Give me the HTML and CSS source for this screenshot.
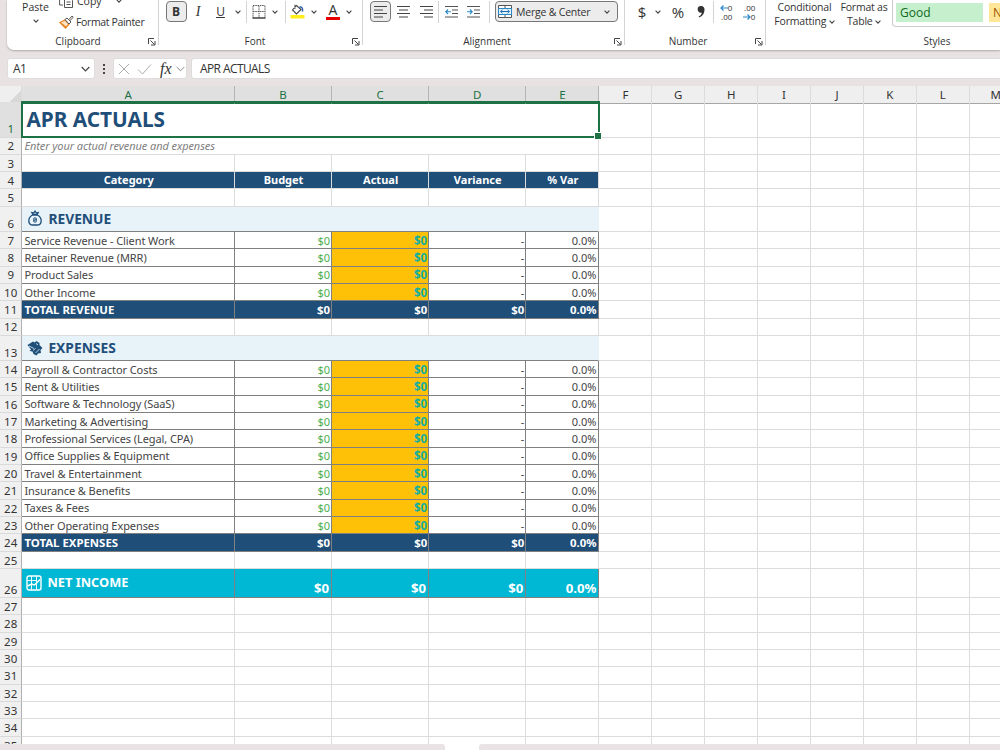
FILE: index.html
```html
<!DOCTYPE html>
<html lang="en">
<head>
  <meta charset="UTF-8">
  <meta name="viewport" content="width=device-width, initial-scale=1.0">
  <title>APR Actuals</title>
  <link rel="stylesheet" href="styles.css">
</head>
<body>

  <!-- Shared icons -->
  <svg class="symbols">
    <symbol id="chev" viewBox="0 0 6 4"><path d="M.6.7 3 3.1 5.4.7" fill="none" stroke="#444" stroke-width="1.1"/></symbol>
    <symbol id="launch" viewBox="0 0 8 8"><path d="M.5 6V.5H6M2.5 2.5l4 4M7 3v4H3" fill="none" stroke="#444"/></symbol>
    <symbol id="bag" viewBox="0 0 14 16"><path d="M4.5 5C2 6.500.8 8.300.8 10.700.8 13.500 2.500 15 5 15h4c2.500 0 4.200-1.500 4.200-4.300C13.200 8.300 12 6.500 9.500 5zM5 4.500 3.800 2.500l2 .3L7 1.200l1.200 1.600 2-.3L9 4.500z" fill="none" stroke="#1f4e79" stroke-width="1.300"/><ellipse cx="7" cy="10" rx="2" ry="2.700" fill="#1f4e79"/><path d="M8 9c-.8-.7-2-.3-1.900.4.1.8 1.900.5 1.900 1.400 0 .7-1.300.9-2 .2" fill="none" stroke="#e7f3f9" stroke-width=".6"/></symbol>
    <symbol id="money" viewBox="0 0 16 16"><path d="M.5 5 6 1.500l1.500 1L9.500 1l3 2v2L15.500 8l-2 2 .5 3-3 .5L9.500 15.500l-3-1.500-1-2.500-3-.5L4 9.500z" fill="#1f4e79"/><path d="M2 6l5 2.500M6 10.500l2.500-2M8.500 13l4-4M9 3.500l2 1.500" stroke="#e7f3f9" stroke-width=".8" fill="none"/></symbol>
    <symbol id="chart" viewBox="0 0 16 16"><path d="M3 1h10a2 2 0 0 1 2 2v10a2 2 0 0 1-2 2H3a2 2 0 0 1-2-2V3a2 2 0 0 1 2-2z" fill="none" stroke="#fff" stroke-width="1.400"/><path d="M5.500 1v14M10.500 1v14M1 5.500h9" fill="none" stroke="#fff" stroke-width=".9"/><path d="m1.500 11 4-2 3 1 5.500-5.500" fill="none" stroke="#fff" stroke-width="1.500"/></symbol>
  </svg>

  <!-- Ribbon -->
  <div class="ribbon">
    <div class="group clipboard">
      <div class="paste">Paste<svg class="chev"><use href="#chev"/></svg></div>
      <div class="clip-list">
        <div class="clip-item">
          <svg width="15" height="14" viewBox="0 0 15 14"><path d="M4 11H.6V1H5M5.500 3.500h5l3 3v7h-8zM7.500 8h4M7.500 10.500h4" fill="none" stroke="#555"/></svg>
          Copy<svg class="chev copy-chev"><use href="#chev"/></svg>
        </div>
        <div class="clip-item painter">
          <svg width="15" height="14" viewBox="0 0 15 14"><path d="M1 7.500 6 5l4 4-3.500 4z" fill="#fbe3c4" stroke="#e8821e" stroke-width="1.300"/><path d="M3.500 9 7 12" stroke="#e8821e"/><path d="m6 4.500 2-1.500 4 4-2 2zM10 4.500 13 1l1.300 1.300L11 5.500" fill="#fff" stroke="#555"/></svg>
          Format Painter
        </div>
      </div>
      <div class="group-label">Clipboard</div>
      <svg class="launch"><use href="#launch"/></svg>
    </div>

    <div class="group font">
      <div class="tools">
        <b class="pressed">B</b>
        <i class="serif">I</i>
        <u>U</u>
        <svg class="chev"><use href="#chev"/></svg>
        <span class="sep"></span>
        <svg width="14" height="14" viewBox="0 0 14 14"><path d="M1 .5h12M1 6.500h12M1 1v12M7 1v12M13 1v12" fill="none" stroke="#555" stroke-dasharray="1.500 .8"/><path d="M.5 13h13" stroke="#222" stroke-width="1.300"/></svg>
        <svg class="chev"><use href="#chev"/></svg>
        <span class="sep"></span>
        <svg width="15" height="15" viewBox="0 0 15 15"><path d="M6.500 1.500 2.500 6l4 4L11 5.500z M5 .8v4" fill="none" stroke="#444" stroke-width="1.100"/><path d="M9.500 3.200c2-.8 3.500.5 3 4.300" stroke="#2b62a8" stroke-width="1.500" fill="none"/><path d="M.5 11h14v3.500H.5z" fill="#ffee1c"/></svg>
        <svg class="chev"><use href="#chev"/></svg>
        <span class="font-color">A</span>
        <svg class="chev"><use href="#chev"/></svg>
      </div>
      <div class="group-label">Font</div>
      <svg class="launch"><use href="#launch"/></svg>
    </div>

    <div class="group alignment">
      <div class="tools">
        <span class="pressed"><svg width="13" height="12" viewBox="0 0 13 12"><path d="M0 .5h13M0 4h9M0 7.500h13M0 11h9" stroke="#444"/></svg></span>
        <svg width="13" height="12" viewBox="0 0 13 12"><path d="M0 .5h13M2 4h9M0 7.500h13M2 11h9" stroke="#444"/></svg>
        <svg width="13" height="12" viewBox="0 0 13 12"><path d="M0 .5h13M4 4h9M0 7.500h13M4 11h9" stroke="#444"/></svg>
        <span class="sep"></span>
        <svg width="13" height="12" viewBox="0 0 13 12"><path d="M0 .5h13M7 4h6M7 7.500h6M0 11h13" stroke="#555"/><path d="M6 5.800H1M3 3.500.8 5.800 3 8" stroke="#2b88c8" stroke-width="1.100" fill="none"/></svg>
        <svg width="13" height="12" viewBox="0 0 13 12"><path d="M0 .5h13M7 4h6M7 7.500h6M0 11h13" stroke="#555"/><path d="M0 5.800h5M3 3.500l2.200 2.300L3 8" stroke="#2b88c8" stroke-width="1.100" fill="none"/></svg>
        <span class="sep"></span>
        <div class="merge">
          <svg width="14" height="13" viewBox="0 0 14 13"><path d="M.5.5h13v12H.5zM7 .5V3M7 10v2.500" fill="#fff" stroke="#555"/><path d="M.5 3.500h13v6H.5z" fill="#e4f2fb" stroke="#2b88c8"/><path d="M2.500 6.500h9M4.500 4.800 2.700 6.500l1.800 1.700M9.500 4.800l1.800 1.700-1.800 1.700" fill="none" stroke="#1b6cb0"/></svg>
          <span>Merge &amp; Center</span>
          <svg class="chev"><use href="#chev"/></svg>
        </div>
      </div>
      <div class="group-label">Alignment</div>
      <svg class="launch"><use href="#launch"/></svg>
    </div>

    <div class="group number">
      <div class="tools">
        <span class="big">$</span>
        <svg class="chev"><use href="#chev"/></svg>
        <span class="big">%</span>
        <svg width="8" height="12" viewBox="0 0 8 12"><path d="M4 0a3.300 3.300 0 0 1 3.500 3.500C7.500 8 5 10.500 2 11.500l-.4-.8C3.500 9.800 4.600 8.500 4.800 6.600 2.500 7.300.7 5.700.7 3.500A3.300 3.300 0 0 1 4 0z" fill="#333"/></svg>
        <span class="sep"></span>
        <div class="decimals"><span><svg width="8" height="6" viewBox="0 0 8 6"><path d="M8 3H1M3.500.5 1 3l2.500 2.500" fill="none" stroke="#2b88c8" stroke-width="1.200"/></svg>0</span><span>.00</span></div>
        <div class="decimals"><span>.00</span><span><svg width="8" height="6" viewBox="0 0 8 6"><path d="M0 3h7M4.500.5 7 3 4.500 5.500" fill="none" stroke="#2b88c8" stroke-width="1.200"/></svg>0</span></div>
      </div>
      <div class="group-label">Number</div>
      <svg class="launch"><use href="#launch"/></svg>
    </div>

    <div class="group styles">
      <div class="style-btn conditional">Conditional<br>Formatting <svg class="chev"><use href="#chev"/></svg></div>
      <div class="style-btn">Format as<br>Table <svg class="chev"><use href="#chev"/></svg></div>
      <div class="gallery">
        <div class="good">Good</div>
        <div class="neutral">Neutral</div>
      </div>
      <div class="group-label">Styles</div>
    </div>
  </div>

  <!-- Formula bar -->
  <div class="formula-bar">
    <div class="name-box">A1<svg width="9" height="6" viewBox="0 0 9 6"><path d="m.7 1 3.800 3.800L8.300 1" fill="none" stroke="#444" stroke-width="1.200"/></svg></div>
    <div class="dots"><i></i><i></i><i></i></div>
    <div class="fx-box">
      <svg width="12" height="12" viewBox="0 0 12 12"><path d="m1 1 10 10M11 1 1 11" stroke="#aaa"/></svg>
      <svg width="15" height="12" viewBox="0 0 15 12"><path d="m1 6.500 4.500 4.500L14 1.500" fill="none" stroke="#aaa"/></svg>
      <span class="fx">fx</span>
      <svg width="9" height="6" viewBox="0 0 9 6"><path d="m.7 1 3.800 3.800L8.300 1" fill="none" stroke="#888"/></svg>
    </div>
    <div class="formula">APR ACTUALS</div>
  </div>

  <!-- Worksheet -->
  <div class="sheet" id="sheet"></div>

  <div class="tabs">
    <div class="tab-left"></div>
    <div class="tab-right"></div>
  </div>

  <script>
    const columns = 'ABCDEFGHIJKLM'.split('');

    // Rows with content, everything else is empty
    const rows = {
      1: { type: 'title', text: 'APR ACTUALS' },
      2: { type: 'note', text: 'Enter your actual revenue and expenses' },
      4: { type: 'head', cells: ['Category', 'Budget', 'Actual', 'Variance', '% Var'] },
      6: { type: 'section', icon: 'bag', text: 'REVENUE' },
      11: { type: 'total', cells: ['TOTAL REVENUE', '$0', '$0', '$0', '0.0%'] },
      13: { type: 'section', icon: 'money', text: 'EXPENSES' },
      24: { type: 'total', cells: ['TOTAL EXPENSES', '$0', '$0', '$0', '0.0%'] },
      26: { type: 'net', icon: 'chart', cells: ['NET INCOME', '$0', '$0', '$0', '0.0%'] }
    };

    const revenue = ['Service Revenue - Client Work', 'Retainer Revenue (MRR)', 'Product Sales', 'Other Income'];
    const expenses = [
      'Payroll & Contractor Costs', 'Rent & Utilities', 'Software & Technology (SaaS)',
      'Marketing & Advertising', 'Professional Services (Legal, CPA)', 'Office Supplies & Equipment',
      'Travel & Entertainment', 'Insurance & Benefits', 'Taxes & Fees', 'Other Operating Expenses'
    ];

    function addItems(names, start) {
      names.forEach((name, i) => {
        rows[start + i] = { type: 'item', cells: [name, '$0', '$0', '-', '0.0%'] };
      });
    }

    addItems(revenue, 7);
    addItems(expenses, 14);

    function icon(name) {
      return name ? `<svg class="icon"><use href="#${name}"/></svg>` : '';
    }

    function createSheet() {
      let html = '<div class="row col-heads"><div class="corner"></div>';
      columns.forEach((c, i) => {
        html += `<div class="col-head${i < 5 ? ' selected' : ''}">${c}</div>`;
      });
      html += '</div>';

      for (let n = 1; n <= 35; n++) {
        const row = rows[n] || { type: 'empty' };
        html += `<div class="row ${row.type}"><div class="row-head${n === 1 ? ' selected' : ''}">${n}</div>`;
        if (row.text) {
          html += `<div class="cell merged">${icon(row.icon)}<span>${row.text}</span></div>`;
        } else {
          for (let i = 0; i < 5; i++) {
            const text = row.cells ? row.cells[i].replace('&', '&amp;') : '';
            html += `<div class="cell c${i}">${i === 0 ? icon(row.icon) : ''}<span>${text}</span></div>`;
          }
        }
        for (let i = 5; i < columns.length; i++) {
          html += '<div class="cell blank"></div>';
        }
        html += '</div>';
      }
      document.getElementById('sheet').innerHTML = html;
    }

    createSheet();
  </script>

</body>
</html>
```
FILE: styles.css
```css
* {
  margin: 0;
  padding: 0;
  box-sizing: border-box;
}

body {
  width: 1000px;
  height: 750px;
  overflow: hidden;
  display: flex;
  flex-direction: column;
  background: #e8e3e2;
  color: #333;
  font-family: "Noto Sans", "Open Sans", sans-serif;
  font-size: 11px;
}

.symbols {
  display: none;
}

.chev {
  width: 6px;
  height: 4px;
}

/* Ribbon */
.ribbon {
  flex: none;
  height: 50px;
  margin-left: 7px;
  display: flex;
  background: #fff;
  border-bottom-left-radius: 7px;
  box-shadow: 0 1px 2px rgba(0, 0, 0, 0.25);
  font-family: "Open Sans", sans-serif;
  font-size: 10.5px;
}

.group {
  position: relative;
  height: 45px;
  flex: none;
  display: flex;
  border-right: 1px solid #d4d4d4;
}

.group-label {
  position: absolute;
  left: 0;
  right: 11px;
  bottom: -3px;
  text-align: center;
  font-size: 10px;
  line-height: 14px;
}

.launch {
  position: absolute;
  right: 2px;
  bottom: -1px;
  width: 8px;
  height: 8px;
}

.clipboard {
  width: 152px;
}

.clipboard .group-label {
  right: 9px;
}

.paste {
  width: 57px;
  display: flex;
  flex-direction: column;
  align-items: center;
  line-height: 14px;
}

.paste .chev {
  margin-top: 5px;
}

.clip-list {
  margin-top: -6px;
}

.clip-item {
  display: flex;
  align-items: center;
  gap: 3px;
  height: 14px;
  margin-left: -5px;
  white-space: nowrap;
}

.painter {
  margin-top: 7px;
  gap: 2px;
  letter-spacing: -0.35px;
}

.copy-chev {
  margin-left: 11px;
}

.tools {
  display: grid;
  height: 23px;
  align-items: center;
  justify-items: center;
}

.sep {
  width: 1px;
  height: 22px;
  background: #d4d4d4;
}

.pressed {
  display: flex;
  align-items: center;
  justify-content: center;
  width: 21px;
  height: 21px;
  background: #ececec;
  border: 1px solid #777;
  border-radius: 4px;
}

.font {
  width: 204px;
}

.font .tools {
  padding-left: 6px;
  grid-template-columns: 22px 22px 23px 11px 7px 18px 14px 6px 19px 13px 26px 6px;
}

.font .tools b,
.font .tools u {
  font-size: 12px;
}

.serif {
  font-family: "Liberation Serif", serif;
  font-size: 14px;
}

.font-color {
  width: 14px;
  height: 16px;
  border-bottom: 3px solid #e60000;
  font-size: 14px;
  line-height: 12px;
  text-align: center;
}

.alignment {
  width: 262px;
}

.alignment .group-label {
  right: 13px;
}

.alignment .tools {
  padding-left: 7px;
  grid-template-columns: 21px 24px 22px 3px 22px 22px 11px 123px;
}

.merge {
  width: 123px;
  height: 21px;
  display: flex;
  align-items: center;
  padding: 0 7px 0 2px;
  gap: 4px;
  background: #ececec;
  border: 1px solid #777;
  border-radius: 4px;
  letter-spacing: -0.2px;
  white-space: nowrap;
}

.merge .chev {
  margin-left: auto;
}

.number {
  width: 141px;
}

.number .group-label {
  right: 14px;
}

.number .tools {
  padding-left: 7px;
  grid-template-columns: 20px 12px 28px 18px 7px 18px 28px;
}

.big {
  font-size: 15px;
}

.decimals {
  display: flex;
  flex-direction: column;
  align-items: flex-end;
  font-size: 8px;
  line-height: 9px;
}

.styles {
  width: 234px;
  padding-left: 5px;
  border-right: 0;
}

.styles .group-label {
  left: 108px;
  right: 0;
}

.style-btn {
  flex: none;
  width: 52px;
  text-align: center;
  letter-spacing: -0.2px;
  line-height: 14px;
  white-space: nowrap;
}

.style-btn .chev {
  vertical-align: 1px;
}

.style-btn.conditional {
  width: 67px;
}

.gallery {
  flex: 1;
  display: flex;
  gap: 6px;
  height: 27px;
  margin-left: 2px;
  padding: 3px 0 4px 3px;
  border: 1px solid #ccc;
  border-width: 0 0 1px 1px;
  border-bottom-left-radius: 4px;
  overflow: hidden;
}

.good,
.neutral {
  flex: none;
  width: 87px;
  padding-left: 4px;
  font-size: 12px;
  line-height: 19px;
}

.good {
  background: #c6efce;
  color: #106a20;
}

.neutral {
  background: #ffe699;
  color: #9c5700;
}

/* Formula bar */
.formula-bar {
  flex: none;
  height: 36px;
  padding: 8px 0 7px 7px;
  display: flex;
  font-family: "Open Sans", sans-serif;
  font-size: 12px;
  letter-spacing: -0.6px;
}

.name-box,
.fx-box,
.formula {
  height: 21px;
  display: flex;
  align-items: center;
  background: #fff;
  border: 1px solid #ddd;
  border-radius: 3px;
}

.name-box {
  width: 88px;
  padding: 0 4px 0 5px;
  justify-content: space-between;
}

.dots {
  width: 18px;
  display: flex;
  flex-direction: column;
  align-items: center;
  justify-content: center;
  gap: 2px;
}

.dots i {
  width: 2px;
  height: 2px;
  background: #444;
}

.fx-box {
  width: 74px;
  padding-left: 4px;
  gap: 7px;
}

.fx {
  margin-left: 1px;
  font: italic 16px "Liberation Serif", serif;
  letter-spacing: 0;
}

.fx + svg {
  margin-left: -3px;
}

.formula {
  flex: 1;
  margin-left: 4px;
  padding-left: 8px;
  border-right: 0;
  border-radius: 3px 0 0 3px;
}

/* Worksheet */
.sheet {
  height: 657.5px;
  flex: none;
  overflow: hidden;
  background: #fff;
}

.row {
  display: grid;
  grid-template-columns: 22.4px 212.6px 97.1px 97.1px 97.1px 73.2px repeat(8, 52.9px);
  height: 17.33px;
}

.col-heads {
  height: 16px;
  font-size: 11.5px;
  line-height: 17px;
  text-align: center;
}

.col-head,
.corner {
  background: #efefef;
  border-right: 1px solid #dcdcdc;
  border-bottom: 1px solid #a6a6a6;
}

.col-head.selected {
  background: #e0e0e0;
  border-right-color: #b5b5b5;
  border-bottom-color: #1e7145;
  color: #1e7145;
}

.corner {
  background: linear-gradient(135deg, #efefef 66%, #d8d8d8 66%);
}

.row-head {
  display: flex;
  align-items: flex-end;
  justify-content: center;
  background: #f0f0f0;
  border-right: 1px solid #b0b0b0;
  border-bottom: 1px solid #dadada;
  font-size: 11.5px;
  line-height: 15.5px;
}

.row-head.selected {
  background: #e0e0e0;
  color: #1e7145;
}

.cell {
  display: flex;
  align-items: center;
  padding: 0 1px 0 2px;
  border-right: 1px solid #dcdcdc;
  border-bottom: 1px solid #dcdcdc;
  color: #444;
  white-space: nowrap;
  line-height: 15px;
}

.merged {
  grid-column: 2 / 7;
}

.title {
  height: 35.5px;
}

.title .merged {
  position: relative;
  margin: -1px -1px 0 -1px;
  padding-left: 3px;
  border: 2px solid #1e7145;
  color: #1f4e79;
  font-size: 20.8px;
  font-weight: bold;
}

.title .merged::after {
  content: "";
  position: absolute;
  right: -4px;
  bottom: -4px;
  width: 6px;
  height: 6px;
  background: #1e7145;
  border: 1px solid #fff;
}

.note .merged {
  color: #808080;
  font-style: italic;
  letter-spacing: -0.08px;
}

.head .cell:not(.blank) {
  justify-content: center;
  padding: 0 0 1px 1px;
  background: #1f4e79;
  color: #fff;
  font-weight: bold;
}

.section {
  height: 25.2px;
}

.section .merged {
  padding-left: 5px;
  padding-bottom: 1px;
  gap: 5px;
  background: #e7f3f9;
  border-right-color: #e7f3f9;
  border-bottom-color: #808080;
  color: #1f4e79;
  font-size: 13.8px;
  font-weight: bold;
}

.icon {
  width: 16px;
  height: 16px;
}

.item .cell:not(.blank),
.total .cell:not(.blank),
.net .cell:not(.blank) {
  justify-content: flex-end;
  border-color: #808080;
}

.item .cell.c0,
.total .cell.c0,
.net .cell.c0 {
  justify-content: flex-start;
}

.item .c0 {
  letter-spacing: -0.08px;
}

.item .c1 {
  color: #4caf50;
}

.item .c2 {
  background: #ffc107;
  color: #12aea0;
  font-size: 11.5px;
  font-weight: bold;
}

.item .c4,
.total .c4 {
  padding-right: 2px;
}

.total .cell:not(.blank) {
  background: #1f4e79;
  color: #fff;
  font-size: 11.4px;
  font-weight: bold;
}

.net {
  height: 29px;
}

.net .cell:not(.blank) {
  align-items: flex-end;
  padding-right: 2px;
  padding-bottom: 1px;
  background: #00b8d4;
  color: #fff;
  font-size: 13.2px;
  font-weight: bold;
}

.net .cell.c0 {
  align-items: center;
  padding-left: 4px;
  gap: 5px;
  font-size: 12.8px;
}

/* Sheet tabs */
.tabs {
  flex: 1;
  display: flex;
  justify-content: space-between;
  background: #fff;
}

.tab-left,
.tab-right {
  background: #e9e3e5;
}

.tab-left {
  width: 445px;
  border-top-right-radius: 3px;
}

.tab-right {
  width: 521px;
  border-top-left-radius: 3px;
}
```
